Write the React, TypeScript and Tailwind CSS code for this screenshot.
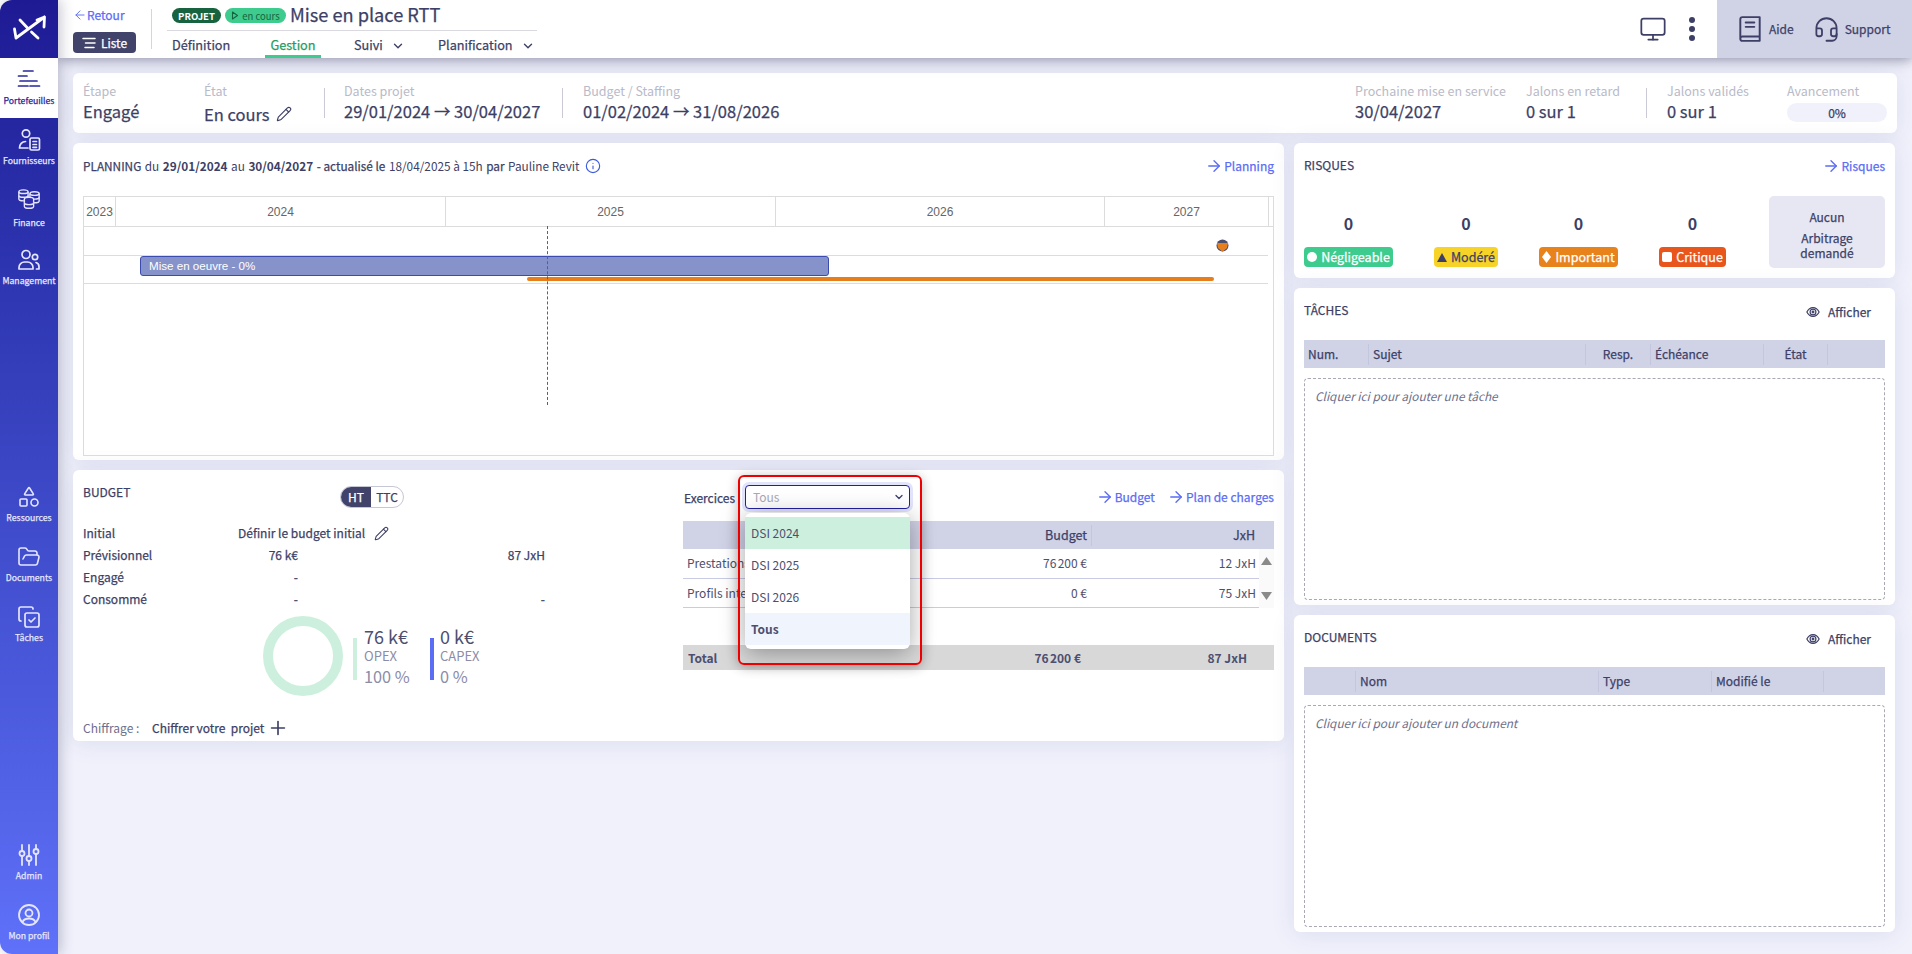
import { ArrowRight, ChevronDown, FolderOpen, Headset, Info, Monitor, Pencil, Plus, Shapes, CopyCheck, ArrowLeft } from 'lucide-react';
import type { ReactNode } from 'react';

const card = 'rounded-[6px] bg-white shadow-[0_2px_24px_rgba(60,60,140,0.10)]';
const medium = '[-webkit-text-stroke:0.25px_currentColor]';

function NavItem({ icon, label, active, labelGap = 'mt-[2px]' }: { icon: ReactNode; label: string; active?: boolean; labelGap?: string }) {
  return (
    <div className={`flex h-[60px] flex-col items-center pt-[10px] ${active ? 'bg-white text-[#2a289c]' : 'text-[#e4e6ff]'}`}>
      <div className="flex h-[24px] w-[24px] items-center justify-center">{icon}</div>
      <span className={`${labelGap} text-[8.700px] leading-[14px] whitespace-nowrap ${medium}`}>{label}</span>
    </div>
  );
}

function PortfolioIcon() {
  return (
    <svg width="24" height="24" viewBox="0 0 24 24" fill="none" stroke="currentColor" strokeWidth="1.7" strokeLinecap="round">
      <path d="M6.500 3h9.500M1.500 8h8.500M3 13h7M10.500 13h9.500M1.500 18h9.500M13 18h9.500" />
    </svg>
  );
}

function SupplierIcon() {
  return (
    <svg width="26" height="26" viewBox="0 0 24 24" fill="none" stroke="currentColor" strokeWidth="1.7" strokeLinecap="round" strokeLinejoin="round">
      <circle cx="9" cy="5.500" r="3.700" />
      <path d="M11 20H2.500c0-3.500 2.500-6.500 6-6.500" />
      <rect x="13" y="10" width="9.500" height="12" rx="1.500" />
      <path d="M16 13.500h3.500M16 16.500h3.500M16 19.300h3.500" />
    </svg>
  );
}

function Cylinder({ cx, cy }: { cx: number; cy: number }) {
  const rx = 5;
  const ry = 2;
  return (
    <g>
      <ellipse cx={cx} cy={cy} rx={rx} ry={ry} />
      <path d={`M${cx - rx} ${cy}v8c0 1.100 2.200 2 ${rx} 2s${rx}-.900 ${rx}-2v-8`} />
      <path d={`M${cx - rx} ${cy + 4}c0 1.100 2.200 2 ${rx} 2s${rx}-.900 ${rx}-2`} />
    </g>
  );
}

function FinanceIcon() {
  return (
    <svg width="26" height="26" viewBox="0 0 26 26" fill="white" stroke="none">
      <g fill="none" stroke="currentColor" strokeWidth="1.500">
        <Cylinder cx={7} cy={4} />
        <Cylinder cx={19} cy={6} />
      </g>
      <g fill="#2f2da8" stroke="currentColor" strokeWidth="1.500">
        <Cylinder cx={13} cy={12} />
      </g>
    </svg>
  );
}

function ManagementIcon() {
  return (
    <svg width="26" height="26" viewBox="0 0 24 24" fill="none" stroke="currentColor" strokeWidth="1.700" strokeLinecap="round" strokeLinejoin="round">
      <circle cx="9" cy="6.500" r="4" />
      <circle cx="18" cy="9" r="2.700" />
      <path d="M2 21v-1.500C2 16.500 4.500 14 7.500 14h3c3 0 5.500 2.500 5.500 5.500V21z" />
      <path d="M19 14.500c1.800.500 3 2.200 3 4V21h-2.500" />
    </svg>
  );
}

function AdminIcon() {
  return (
    <svg width="24" height="24" viewBox="0 0 24 24" fill="none" stroke="currentColor" strokeWidth="1.800" strokeLinecap="round">
      <path d="M5 2v6M5 13v9M12 2v11M12 18v4M19 2v4M19 11v11" />
      <circle cx="5" cy="10.500" r="2.500" />
      <circle cx="12" cy="15.500" r="2.500" />
      <circle cx="19" cy="8.500" r="2.500" />
    </svg>
  );
}

function ProfileIcon() {
  return (
    <svg width="24" height="24" viewBox="0 0 24 24" fill="none" stroke="currentColor" strokeWidth="1.800" strokeLinecap="round">
      <circle cx="12" cy="12" r="10" />
      <circle cx="12" cy="10" r="3.500" />
      <path d="M5.500 19c1-2.500 3.500-3.500 6.500-3.500s5.500 1 6.500 3.500" />
    </svg>
  );
}

function BookIcon() {
  return (
    <svg width="26" height="28" viewBox="0 0 24 26" fill="none" stroke="currentColor" strokeWidth="1.800" strokeLinecap="round" strokeLinejoin="round">
      <path d="M3 22V4c0-1.200.800-2 2-2h16v18H5c-1.200 0-2 .800-2 2s.800 2 2 2h16v-4" />
      <path d="M8 7h8M8 11h8" />
    </svg>
  );
}

function EyeIcon() {
  return (
    <svg width="14" height="14" viewBox="0 0 24 24" fill="none" stroke="#3d3f66" strokeWidth="2">
      <path d="M1.500 12C4 7 8 4.500 12 4.500S20 7 22.500 12C20 17 16 19.500 12 19.500S4 17 1.500 12z" />
      <circle cx="12" cy="12" r="5" />
      <circle cx="12" cy="12" r="1.500" />
    </svg>
  );
}

function GoLink({ label }: { label: string }) {
  return (
    <span className={`flex items-center gap-[1px] text-[12px] leading-[18px] text-[#5b6cf5] ${medium}`}>
      <ArrowRight size={18} strokeWidth={1.800} />
      {label}
    </span>
  );
}

function Kpi({ label, className, children }: { label: string; className: string; children: ReactNode }) {
  return (
    <div className={className}>
      <div className="text-[12.500px] leading-[20px] text-[#b9bac8] whitespace-nowrap">{label}</div>
      {children}
    </div>
  );
}

const kpiValue = `text-[16.500px] leading-[20px] text-[#3d3f66] whitespace-nowrap ${medium}`;

function Divider() {
  return <div className="mt-[15px] h-[30px] w-px bg-[#c9cad6]" />;
}

function HeadCell({ width, label, className = '', last }: { width: number; label?: string; className?: string; last?: boolean }) {
  return (
    <div style={{ width }} className="flex h-full items-center">
      <div className={`flex h-[21px] w-full items-center text-[12px] leading-[20px] text-[#3d3f66] ${medium} ${last ? '' : 'border-r border-[#c4c6dd]'} ${className}`}>
        {label}
      </div>
    </div>
  );
}

function ListCard({ title, hint, columns, className }: { title: string; hint: string; columns: { w: number; label?: string; className?: string }[]; className: string }) {
  return (
    <section className={`${card} ${className} flex flex-col px-[10px] pb-[5px]`}>
      <div className="flex h-[52px] shrink-0 items-start justify-between pt-[15px]">
        <h2 className={`mt-[-1px] text-[12px] leading-[16px] text-[#3d3f66] ${medium}`}>{title}</h2>
        <span className={`mr-[14px] flex items-center gap-[8px] text-[12px] leading-[18px] text-[#3d3f66] ${medium}`}>
          <EyeIcon />
          Afficher
        </span>
      </div>
      <div className="flex h-[28px] shrink-0 bg-[#d0d2e6]">
        {columns.map((c, i) => (
          <HeadCell key={i} width={c.w} label={c.label} className={c.className} last={i === columns.length - 1} />
        ))}
      </div>
      <div className="mt-[10px] flex-1 rounded-[4px] border border-dashed border-[#a8a9b5] px-[10px] py-[8px] text-[11.800px] leading-[18px] text-[#6d6f8b] italic">
        {hint}
      </div>
    </section>
  );
}

function RiskStat({ width, bg, text, icon, label }: { width: number; bg: string; text: string; icon: ReactNode; label: string }) {
  return (
    <div style={{ width }} className="flex flex-col items-center">
      <div className="text-[16px] leading-[20px] font-bold text-[#3d3f66]">0</div>
      <div className={`mt-[14px] flex h-[20px] w-full items-center justify-center gap-[4px] rounded-[4px] text-[12.500px] leading-[18px] ${medium} ${bg} ${text}`}>
        {icon}
        {label}
      </div>
    </div>
  );
}

function BudgetRow({ label, first, second }: { label: string; first?: string; second?: string }) {
  return (
    <div className="flex h-[22px] items-center text-[12px] leading-[18px] text-[#3d3f66]">
      <span className={`w-[155px] ${medium}`}>{label}</span>
      <span className={`w-[60px] text-right ${medium}`}>{first}</span>
      <span className={`w-[247px] text-right ${medium}`}>{second}</span>
    </div>
  );
}

function DistRow({ name, budget, days }: { name: string; budget: string; days: string }) {
  return (
    <div className="flex h-[29.500px] items-center border-b border-[#c8cbe3] text-[12px] leading-[18px] text-[#4d4f70]">
      <span className="w-[404px] pl-[4px] whitespace-nowrap">
        <span className="float-left">{name}</span>
        <span className="float-right">{budget}</span>
      </span>
      <span className="flex-1 pr-[3px] text-right">{days}</span>
    </div>
  );
}

function OptionRow({ label, className }: { label: string; className: string }) {
  return <div className={`flex h-[32px] items-center px-[6px] text-[12px] leading-[18px] text-[#4d4f70] ${className}`}>{label}</div>;
}

const years = [
  { label: '2023', w: 32 },
  { label: '2024', w: 330 },
  { label: '2025', w: 330 },
  { label: '2026', w: 329 },
  { label: '2027', w: 164 },
];

export default function App() {
  return (
    <div className="flex h-[954px] w-[1912px] overflow-hidden bg-white font-['Noto_Sans_CJK_SC',sans-serif]">
      {/* Sidebar */}
      <aside className="relative z-20 flex h-full w-[58px] shrink-0 flex-col rounded-tl-[12px] rounded-bl-[12px] bg-gradient-to-b from-[#1e1a94] to-[#5f71f9] shadow-[2px_0_14px_rgba(50,50,90,0.3)]">
        <div className="flex h-[58px] items-center justify-center text-white">
          <svg width="36" height="30" viewBox="0 0 36 30" fill="none" stroke="currentColor" strokeWidth="2.800" strokeLinecap="round" strokeLinejoin="round">
            <path d="M3.500 15L5 24 33.500 3 26 6M33.500 3L33 13" />
            <path d="M9 6l8 8.500M20.500 18l6.500 6" />
          </svg>
        </div>
        <NavItem active icon={<PortfolioIcon />} label="Portefeuilles" />
        <NavItem icon={<SupplierIcon />} label="Fournisseurs" />
        <NavItem icon={<FinanceIcon />} label="Finance" labelGap="mt-[4px]" />
        <NavItem icon={<ManagementIcon />} label="Management" />
        <div className="mt-[177px]">
          <NavItem icon={<Shapes size={28} strokeWidth={1.600} />} label="Ressources" />
          <NavItem icon={<FolderOpen size={28} strokeWidth={1.600} />} label="Documents" />
          <NavItem icon={<CopyCheck size={24} strokeWidth={1.700} />} label="Tâches" />
        </div>
        <div className="mt-auto pb-[1px]">
          <NavItem icon={<AdminIcon />} label="Admin" />
          <NavItem icon={<ProfileIcon />} label="Mon profil" />
        </div>
      </aside>

      <div className="flex min-w-0 flex-1 flex-col bg-[#f0f1fb]">
        {/* Header */}
        <header className="relative z-10 flex h-[58px] shrink-0 bg-white pl-[15px] shadow-[0_2px_12px_rgba(50,50,90,0.5)]">
          <div className="flex w-[63px] flex-col">
            <span className={`mt-[6px] flex h-[18px] items-center text-[12px] leading-[18px] text-[#5b6cf5] ${medium}`}>
              <ArrowLeft size={14} strokeWidth={1.600} />
              Retour
            </span>
            <span className={`mt-[8px] flex h-[21px] w-[63px] items-center justify-center gap-[5px] rounded-[4px] bg-[#41436b] text-[12px] leading-[18px] text-white ${medium}`}>
              <svg width="14" height="14" viewBox="0 0 14 14" fill="none" stroke="currentColor" strokeWidth="1.500" strokeLinecap="round">
                <path d="M1 2.500h12M3.500 7h9.500M3 11.500h9" />
              </svg>
              Liste
            </span>
          </div>
          <div className="mt-[9px] ml-[15px] h-[40px] w-px bg-[#d5d6dd]" />
          <div className="ml-[15px] flex w-[370px] flex-col">
            <div className="flex h-[31px] items-start border-b border-[#d9d9df] pl-[5px]">
              <span className="mt-[8px] flex h-[15px] w-[49px] items-center justify-center rounded-full bg-[#17633f] text-[9.500px] leading-[12px] font-bold text-white">PROJET</span>
              <span className="mt-[8px] ml-[4px] flex h-[15px] w-[61px] items-center justify-center gap-[3px] rounded-full bg-[#3ecb8e] text-[9.500px] leading-[12px] text-[#17633f]">
                <svg width="8" height="9" viewBox="0 0 8 9" fill="none" stroke="currentColor" strokeWidth="1.100" strokeLinejoin="round">
                  <path d="M1.500 1v7l5-3.500z" />
                </svg>
                en cours
              </span>
              <h1 className={`mt-[2px] ml-[4px] text-[18.200px] leading-[24px] whitespace-nowrap text-[#3d3f66] ${medium}`}>Mise en place RTT</h1>
            </div>
            <nav className={`flex h-[27px] text-[12.700px] leading-[20px] text-[#3d3f66] ${medium}`}>
              <span className="ml-[5px] w-[93px] pt-[4px]">Définition</span>
              <span className="flex h-[27px] w-[56px] justify-center border-b-[3px] border-[#3ecb8e] pt-[4px] text-[#1f9e64]">Gestion</span>
              <span className="ml-[33px] flex w-[84px] items-start gap-[8px] pt-[4px]">
                Suivi
                <ChevronDown size={14} strokeWidth={2.400} className="mt-[4px]" />
              </span>
              <span className="flex items-start gap-[8px] pt-[4px] whitespace-nowrap">
                Planification
                <ChevronDown size={14} strokeWidth={2.400} className="mt-[4px]" />
              </span>
            </nav>
          </div>
          <div className="ml-auto flex h-full items-center">
            <Monitor size={28} strokeWidth={1.500} className="text-[#3d3f66]" />
            <div className="mr-[22px] ml-[22px] flex flex-col gap-[3px]">
              <span className="h-[6px] w-[6px] rounded-full bg-[#3d3f66]" />
              <span className="h-[6px] w-[6px] rounded-full bg-[#3d3f66]" />
              <span className="h-[6px] w-[6px] rounded-full bg-[#3d3f66]" />
            </div>
            <div className={`flex h-full w-[195px] items-center bg-[#d0d2e6] pl-[20px] text-[12px] leading-[18px] text-[#3d3f66] ${medium}`}>
              <BookIcon />
              <span className="ml-[6px]">Aide</span>
              <Headset size={27} strokeWidth={1.600} className="ml-[19px]" />
              <span className="ml-[5px]">Support</span>
            </div>
          </div>
        </header>

        {/* Content */}
        <main className="flex flex-1 flex-col pt-[15px] pr-[15px] pl-[15px]">
          <section className={`${card} flex h-[60px] shrink-0`}>
            <Kpi label="Étape" className="ml-[10px] w-[121px] pt-[8px]">
              <div className={kpiValue}>Engagé</div>
            </Kpi>
            <Kpi label="État" className="w-[120px] pt-[8px]">
              <div className={`mt-[3px] flex items-center gap-[6px] ${kpiValue}`}>
                En cours
                <Pencil size={16} strokeWidth={1.700} />
              </div>
            </Kpi>
            <Divider />
            <Kpi label="Dates projet" className="ml-[19px] w-[218px] pt-[8px]">
              <div className={kpiValue}>29/01/2024 → 30/04/2027</div>
            </Kpi>
            <Divider />
            <Kpi label="Budget / Staffing" className="ml-[20px] w-[772px] pt-[8px]">
              <div className={kpiValue}>01/02/2024 → 31/08/2026</div>
            </Kpi>
            <Kpi label="Prochaine mise en service" className="w-[171px] pt-[8px]">
              <div className={kpiValue}>30/04/2027</div>
            </Kpi>
            <Kpi label="Jalons en retard" className="w-[120px] pt-[8px]">
              <div className={kpiValue}>0 sur 1</div>
            </Kpi>
            <Divider />
            <Kpi label="Jalons validés" className="ml-[20px] w-[120px] pt-[8px]">
              <div className={kpiValue}>0 sur 1</div>
            </Kpi>
            <Kpi label="Avancement" className="w-[100px] pt-[8px]">
              <div className={`mt-[2px] flex h-[19px] items-center justify-center rounded-full bg-[#f0f1fb] text-[12px] leading-[18px] text-[#3d3f66] ${medium}`}>0%</div>
            </Kpi>
          </section>

          <div className="mt-[10px] flex gap-[10px]">
            {/* Left column */}
            <div className="flex w-[1211px] flex-col gap-[10px]">
              <section className={`${card} h-[317px] px-[10px]`}>
                <div className="flex h-[53px] items-start justify-between pt-[14px]">
                  <div className="flex items-center text-[11.800px] leading-[18px] text-[#3d3f66]">
                    <span className={medium}>PLANNING</span>
                    <span className="ml-[3.500px]">du</span>
                    <span className="ml-[3.500px] font-bold">29/01/2024</span>
                    <span className="ml-[3.500px]">au</span>
                    <span className="ml-[3.500px] font-bold">30/04/2027</span>
                    <span className={`ml-[3.500px] ${medium}`}>- actualisé le</span>
                    <span className="ml-[3.500px]">18/04/2025 à 15h</span>
                    <span className={`ml-[3.500px] ${medium}`}>par</span>
                    <span className="ml-[3.500px]">Pauline Revit</span>
                    <Info size={16} strokeWidth={1.700} className="ml-[5px] text-[#3b5bdb]" />
                  </div>
                  <GoLink label="Planning" />
                </div>
                <div className="relative h-[260px] w-[1191px] overflow-hidden border border-[#dcdcdc] font-['Liberation_Sans',sans-serif]">
                  <div className="flex h-[30px] border-b border-[#dcdcdc]">
                    {years.map((y) => (
                      <div key={y.label} style={{ width: y.w }} className="flex items-center justify-center border-r border-[#dcdcdc] text-[12px] text-[#666]">
                        {y.label}
                      </div>
                    ))}
                  </div>
                  <div className="mr-[5px] h-[29px] border-b border-[#dcdcdc]" />
                  <div className="mr-[5px] h-[28px] border-b border-[#dcdcdc]" />
                  {/* Free timeline canvas: bars sit at their dates */}
                  <div className="absolute top-[59px] left-[56px] flex h-[20px] w-[689px] items-center rounded-[3px] border border-[#3c4cae] bg-[#8593ca] pl-[8px] text-[11.600px] text-white">
                    Mise en oeuvre - 0%
                  </div>
                  <div className="absolute top-[80px] left-[443px] h-[4px] w-[687px] rounded-full bg-[#e67e1c]" />
                  <div className="absolute top-[29px] bottom-[50px] left-[463px] border-l border-dashed border-[#e0244e]" />
                  <svg className="absolute top-[42px] left-[1132px]" width="13" height="13" viewBox="0 0 13 13">
                    <circle cx="6.500" cy="6.500" r="6" fill="#4b4d6b" />
                    <path d="M1 4h11l-1 5-4.500 3.800L2 9z" fill="#e67e1c" />
                  </svg>
                </div>
              </section>

              <section className={`${card} flex h-[271px] pr-[10px]`}>
                <div className="w-[610px] pl-[10px]">
                  <div className="flex h-[38px] items-start pt-[16px]">
                    <h2 className={`mt-[-1px] w-[257px] text-[12px] leading-[14px] text-[#3d3f66] ${medium}`}>BUDGET</h2>
                    <div className={`flex h-[22px] w-[64px] overflow-hidden rounded-full border border-[#c6c7d4] text-[12px] leading-[18px] ${medium}`}>
                      <span className="flex w-[30px] items-center justify-center bg-[#41436b] text-white">HT</span>
                      <span className="flex flex-1 items-center justify-center text-[#3d3f66]">TTC</span>
                    </div>
                  </div>
                  <div className="mt-[14px]">
                    <div className="flex h-[22px] items-center text-[12px] leading-[18px] text-[#3d3f66]">
                      <span className={`w-[155px] ${medium}`}>Initial</span>
                      <span className={`flex items-center gap-[9px] ${medium}`}>
                        Définir le budget initial
                        <Pencil size={15} strokeWidth={1.700} />
                      </span>
                    </div>
                    <BudgetRow label="Prévisionnel" first="76 k€" second="87 JxH" />
                    <BudgetRow label="Engagé" first="-" />
                    <BudgetRow label="Consommé" first="-" second="-" />
                  </div>
                  <div className="mt-[6px] ml-[180px] flex h-[80px] items-center">
                    <div className="h-[80px] w-[80px] rounded-full border-[10px] border-[#cdf0de]" />
                    <div className="mt-[6px] ml-[10px] h-[42px] w-[4px] bg-[#cdf0de]" />
                    <div className="ml-[7px] w-[66px]">
                      <div className="text-[18px] leading-[20px] text-[#4d4f70]">76 k€</div>
                      <div className="text-[13px] leading-[20px] text-[#8b8ca8]">OPEX</div>
                      <div className="text-[16.300px] leading-[20px] text-[#8b8ca8]">100 %</div>
                    </div>
                    <div className="mt-[6px] h-[42px] w-[4px] bg-[#5b6cf5]" />
                    <div className="ml-[6px]">
                      <div className="text-[18px] leading-[20px] text-[#4d4f70]">0 k€</div>
                      <div className="text-[13px] leading-[20px] text-[#8b8ca8]">CAPEX</div>
                      <div className="text-[16.300px] leading-[20px] text-[#8b8ca8]">0 %</div>
                    </div>
                  </div>
                  <div className="mt-[22px] flex h-[20px] items-center text-[12px] leading-[18px] text-[#3d3f66]">
                    <span className="w-[69px] text-[#6d6f8b]">Chiffrage :</span>
                    <span className={`whitespace-pre ${medium}`}>Chiffrer votre  projet</span>
                    <Plus size={22} strokeWidth={1.800} className="ml-[3px]" />
                  </div>
                </div>

                <div className="flex-1">
                  <div className="flex h-[39px] items-start pt-[15px]">
                    <span className={`mt-[4px] w-[62px] pl-[1px] text-[12px] leading-[18px] text-[#3d3f66] ${medium}`}>Exercices</span>
                    <div className="relative h-[24px] w-[165px]">
                      <div className="flex h-[24px] items-center justify-between rounded-[4px] border-[1.500px] border-[#2320a0] bg-white pr-[4px] pl-[7px] text-[12px] leading-[18px] text-[#a7a8b9] shadow-[0_0_0_3px_#e2e4fb]">
                        Tous
                        <ChevronDown size={12} strokeWidth={2.600} className="text-[#3d3f66]" />
                      </div>
                      {/* Open list and the red annotation lie over the table */}
                      <div className="absolute top-[-10px] left-[-7px] z-30 h-[190px] w-[184px] rounded-[6px] border-2 border-[#ee0000] shadow-[0_2px_12px_rgba(0,0,0,0.28)]" />
                      <div className="absolute top-[28px] left-0 z-20 h-[136px] w-[165px] rounded-[6px] bg-white py-[4px] shadow-[0_4px_24px_rgba(0,0,0,0.35)]">
                        <OptionRow label="DSI 2024" className="bg-[#cdf0de]" />
                        <OptionRow label="DSI 2025" className="" />
                        <OptionRow label="DSI 2026" className="" />
                        <OptionRow label="Tous" className="bg-[#f0f4fd] font-bold" />
                      </div>
                    </div>
                    <div className="ml-auto flex gap-[12px] pt-[3px]">
                      <GoLink label="Budget" />
                      <GoLink label="Plan de charges" />
                    </div>
                  </div>
                  <div className="mt-[12px] flex h-[28px] items-center bg-[#d0d2e6] text-[12.500px] leading-[20px] text-[#3d3f66]">
                    <span className={`w-[404px] text-right ${medium}`}>Budget</span>
                    <span className="ml-[4px] h-[21px] w-px bg-[#c4c6dd]" />
                    <span className={`w-[163px] text-right ${medium}`}>JxH</span>
                  </div>
                  <div className="flex h-[59px]">
                    <div className="w-[576px]">
                      <DistRow name="Prestations intellectuelles" budget={'76\u202f200 €'} days="12 JxH" />
                      <DistRow name="Profils internes" budget="0 €" days="75 JxH" />
                    </div>
                    <div className="flex w-[15px] flex-col items-center justify-between bg-[#fafafa] py-[8px] text-[#8a8a8a]">
                      <svg width="11" height="8" viewBox="0 0 11 8" fill="currentColor"><path d="M5.500 0L11 8H0z" /></svg>
                      <svg width="11" height="8" viewBox="0 0 11 8" fill="currentColor"><path d="M0 0h11L5.500 8z" /></svg>
                    </div>
                  </div>
                  <div className="mt-[37px] flex h-[25px] items-center bg-[#d8d8d8] text-[12px] leading-[18px] font-bold text-[#4d4f70]">
                    <span className="w-[398px] pl-[5px] whitespace-nowrap">
                      <span className="float-left">Total</span>
                      <span className="float-right">{'76\u202f200 €'}</span>
                    </span>
                    <span className="w-[166px] text-right">87 JxH</span>
                  </div>
                </div>
              </section>
            </div>

            {/* Right column */}
            <div className="flex w-[601px] flex-col gap-[10px]">
              <section className={`${card} h-[135px] px-[10px]`}>
                <div className="flex h-[53px] items-start justify-between pt-[14px]">
                  <h2 className={`mt-[-1px] text-[12px] leading-[18px] text-[#3d3f66] ${medium}`}>RISQUES</h2>
                  <GoLink label="Risques" />
                </div>
                <div className="flex h-[72px] items-end">
                  <div className="flex gap-[41px] pb-[1px]">
                    <RiskStat width={89} bg="bg-[#3ecb8e]" text="text-white" label="Négligeable" icon={<span className="h-[10px] w-[10px] rounded-full bg-white" />} />
                    <RiskStat width={64} bg="bg-[#f7d327]" text="text-[#3d3f66]" label="Modéré" icon={<svg width="10" height="9" viewBox="0 0 10 9" fill="currentColor"><path d="M5 0l5 9H0z" /></svg>} />
                    <RiskStat width={79} bg="bg-[#e8831c]" text="text-white" label="Important" icon={<svg width="9" height="12" viewBox="0 0 9 12" fill="currentColor"><path d="M4.500 0L9 6l-4.500 6L0 6z" /></svg>} />
                    <RiskStat width={67} bg="bg-[#e8561c]" text="text-white" label="Critique" icon={<span className="h-[10px] w-[10px] rounded-[2px] bg-white" />} />
                  </div>
                  <div className={`ml-auto flex h-[72px] w-[116px] flex-col items-center rounded-[5px] bg-[#e6e7f3] pt-[13px] text-center text-[12px] leading-[16px] text-[#3d3f66] ${medium}`}>
                    <span>Aucun</span>
                    <span className="mt-[5px]">Arbitrage</span>
                    <span className="mt-[-1px]">demandé</span>
                  </div>
                </div>
              </section>

              <ListCard
                className="h-[317px]"
                title="TÂCHES"
                hint="Cliquer ici pour ajouter une tâche"
                columns={[
                  { w: 65, label: 'Num.', className: 'pl-[4px]' },
                  { w: 217, label: 'Sujet', className: 'pl-[4px]' },
                  { w: 65, label: 'Resp.', className: 'justify-center' },
                  { w: 113, label: 'Échéance', className: 'pl-[4px]' },
                  { w: 64, label: 'État', className: 'justify-center' },
                  { w: 57 },
                ]}
              />

              <ListCard
                className="h-[317px]"
                title="DOCUMENTS"
                hint="Cliquer ici pour ajouter un document"
                columns={[
                  { w: 52 },
                  { w: 243, label: 'Nom', className: 'pl-[4px]' },
                  { w: 113, label: 'Type', className: 'pl-[4px]' },
                  { w: 112, label: 'Modifié le', className: 'pl-[4px]' },
                  { w: 61 },
                ]}
              />
            </div>
          </div>
        </main>
      </div>
    </div>
  );
}
